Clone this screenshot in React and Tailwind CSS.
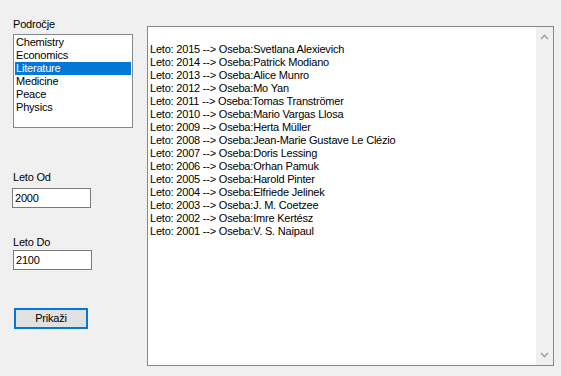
import React from 'react';

const fields = ['Chemistry', 'Economics', 'Literature', 'Medicine', 'Peace', 'Physics'];

const winners = [
    ['2015', 'Svetlana Alexievich'],
    ['2014', 'Patrick Modiano'],
    ['2013', 'Alice Munro'],
    ['2012', 'Mo Yan'],
    ['2011', 'Tomas Tranströmer'],
    ['2010', 'Mario Vargas Llosa'],
    ['2009', 'Herta Müller'],
    ['2008', 'Jean-Marie Gustave Le Clézio'],
    ['2007', 'Doris Lessing'],
    ['2006', 'Orhan Pamuk'],
    ['2005', 'Harold Pinter'],
    ['2004', 'Elfriede Jelinek'],
    ['2003', 'J. M. Coetzee'],
    ['2002', 'Imre Kertész'],
    ['2001', 'V. S. Naipaul'],
];

function Chevron({ down }) {
    return (
        <svg width="9" height="6" viewBox="0 0 9 6" className={down ? 'rotate-180' : ''}>
            <path d="M1 5 L4.5 1.5 L8 5" fill="none" stroke="#a3a3a3" strokeWidth="1.6" />
        </svg>
    );
}

export default function App() {
    return (
        <div className="w-[561px] h-[376px] bg-[#f0f0f0] flex text-[11px] leading-[13px] tracking-[-0.2px] text-black font-['Liberation_Sans',Arial,sans-serif] overflow-hidden">
            {/* left controls */}
            <div className="w-[147px] flex flex-col pt-[18px]">
                <div className="pl-[13px]">Področje</div>
                <div className="ml-[13px] mt-[3px] w-[120px] h-[94px] border border-[#828790] bg-white pt-px px-px">
                    {fields.map((f) => (
                        <div
                            key={f}
                            className={f === 'Literature' ? 'h-[13px] pl-px bg-[#0078d7] text-white' : 'h-[13px] pl-px'}
                        >
                            {f}
                        </div>
                    ))}
                </div>

                <div className="pl-[13px] mt-[43px]">Leto Od</div>
                <div className="ml-[12px] mt-[4px] w-[79px] h-[20px] border border-[#7a7a7a] bg-white pl-[2px] flex items-center">2000</div>

                <div className="pl-[13px] mt-[28px]">Leto Do</div>
                <div className="ml-[13px] mt-px w-[79px] h-[20px] border border-[#7a7a7a] bg-white pl-[2px] flex items-center">2100</div>

                <button className="ml-[14px] mt-[38px] w-[74px] h-[21px] border-2 border-[#0078d7] bg-[#e1e1e1] flex items-center justify-center">
                    Prikaži
                </button>
            </div>

            {/* output box */}
            <div className="mt-[26px] w-[407px] h-[340px] border border-[#828790] bg-white flex">
                <div className="flex-1 pl-[2px] pt-[3px]">
                    <div className="h-[13px]" />
                    {winners.map(([y, n]) => (
                        <div key={y} className="h-[13px] whitespace-nowrap">
                            Leto: {y} --&gt; Oseba:{n}
                        </div>
                    ))}
                </div>
                <div className="w-[17px] bg-[#f0f0f0] flex flex-col items-center justify-between py-[7px]">
                    <Chevron />
                    <Chevron down />
                </div>
            </div>
        </div>
    );
}
